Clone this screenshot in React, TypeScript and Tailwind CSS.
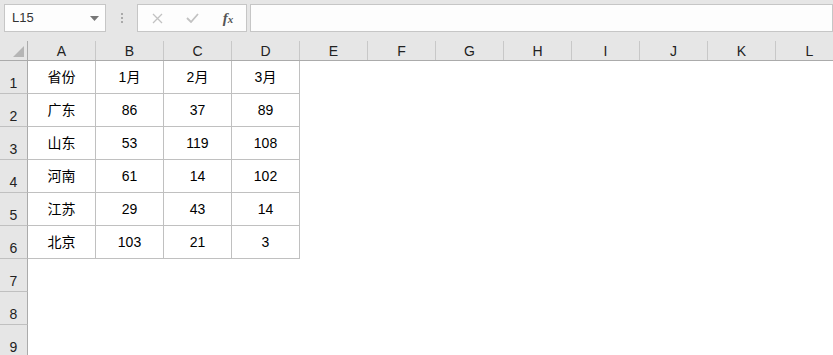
import React from 'react';

const cols = ['A', 'B', 'C', 'D', 'E', 'F', 'G', 'H', 'I', 'J', 'K', 'L'];

const data = [
  ['省份', '1月', '2月', '3月'],
  ['广东', '86', '37', '89'],
  ['山东', '53', '119', '108'],
  ['河南', '61', '14', '102'],
  ['江苏', '29', '43', '14'],
  ['北京', '103', '21', '3'],
];

function FormulaBar() {
  return (
    <div className="h-[41px] bg-[#e6e6e6] flex items-start pt-[4px] pl-[4px]">
      <div className="w-[102px] h-[28px] bg-[#fdfdfd] border border-[#c6c6c6] flex items-center justify-between pl-[7px] pr-[6px] text-[13px] text-[#333]">
        <span>L15</span>
        <svg width="9" height="5" viewBox="0 0 9 5">
          <path d="M0 0 H9 L4.5 5 Z" fill="#777" />
        </svg>
      </div>
      <div className="w-[31px] h-[28px] flex flex-col items-center justify-center gap-[2px]">
        <span className="w-[2px] h-[2px] bg-[#aaa]" />
        <span className="w-[2px] h-[2px] bg-[#aaa]" />
        <span className="w-[2px] h-[2px] bg-[#aaa]" />
      </div>
      <div className="w-[110px] h-[28px] bg-[#fdfdfd] border border-[#c6c6c6] flex items-center">
        <div className="w-[36px] flex justify-center pl-[2px]">
          <svg width="11" height="11" viewBox="0 0 11 11">
            <path d="M1 1 L10 10 M10 1 L1 10" stroke="#c2c2c2" strokeWidth="1.3" />
          </svg>
        </div>
        <div className="w-[36px] flex justify-center">
          <svg width="13" height="10" viewBox="0 0 13 10">
            <path d="M1 5 L5 9 L12 1" stroke="#c2c2c2" strokeWidth="1.8" fill="none" />
          </svg>
        </div>
        <div className="w-[36px] flex justify-center items-baseline font-['Liberation_Serif',serif] italic text-[#555]">
          <span className="text-[15px] font-bold">f</span>
          <span className="text-[11px] font-bold">x</span>
        </div>
      </div>
      <div className="ml-[3px] flex-1 h-[28px] bg-[#fdfdfd] border border-[#c6c6c6]" />
    </div>
  );
}

function HeaderRow() {
  return (
    <div className="flex h-[20px] bg-[#e6e6e6] border-b border-[#ababab]">
      <div className="w-[28px] shrink-0 border-r border-[#ababab] relative">
        <svg className="absolute right-[3px] bottom-[3px]" width="11" height="11" viewBox="0 0 11 11">
          <path d="M11 0 V11 H0 Z" fill="#b5b5b5" />
        </svg>
      </div>
      {cols.map((c) => (
        <div
          key={c}
          className="w-[68px] shrink-0 border-r border-[#c8c8c8] flex items-center justify-center text-[14px] text-[#222] pt-[1px]"
        >
          {c}
        </div>
      ))}
    </div>
  );
}

function Row({ n, cells }: { n: number; cells?: string[] }) {
  return (
    <div className="flex h-[33px]">
      <div className="w-[28px] shrink-0 bg-[#e6e6e6] border-r border-b border-r-[#ababab] border-b-[#c0c0c0] flex items-end justify-center pb-[1px] text-[14px] text-[#222] leading-[18px]">
        {n}
      </div>
      {cols.map((c, i) => {
        const v = cells ? cells[i] : undefined;
        const boxed = cells && i < 4;
        return (
          <div
            key={c}
            className={
              'w-[68px] shrink-0 flex items-center justify-center text-[14px] text-black ' +
              (boxed ? 'border-r border-b border-[#c0c0c0]' : '')
            }
          >
            {v}
          </div>
        );
      })}
    </div>
  );
}

export default function App() {
  return (
    <div className="w-[833px] h-[355px] overflow-hidden bg-white font-['Liberation_Sans','Noto_Sans_CJK_SC',sans-serif]">
      <FormulaBar />
      <HeaderRow />
      {data.map((r, i) => (
        <Row key={i} n={i + 1} cells={r} />
      ))}
      <Row n={7} />
      <Row n={8} />
      <Row n={9} />
    </div>
  );
}
